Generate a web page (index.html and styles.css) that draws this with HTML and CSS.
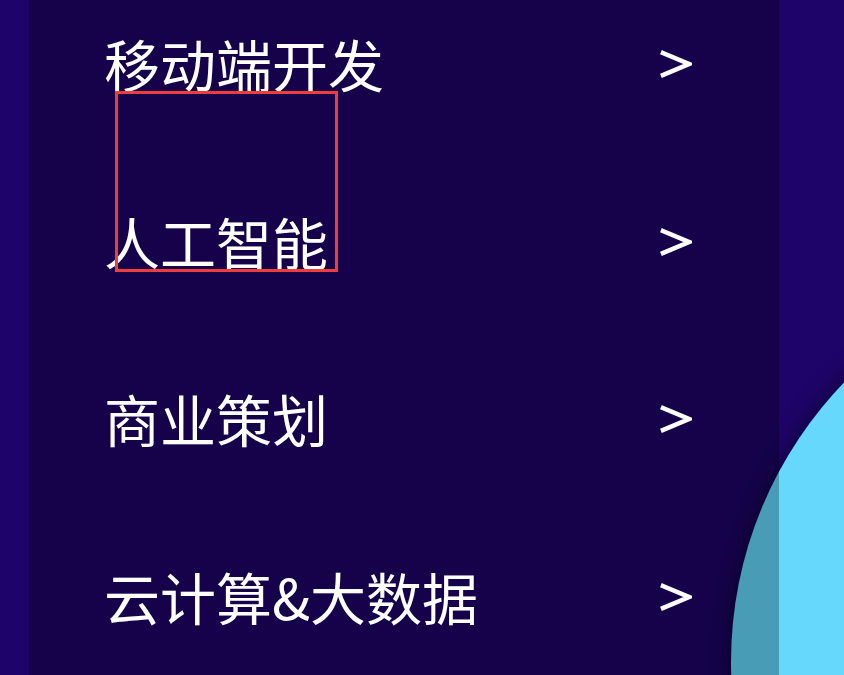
FILE: index.html
```html
<!DOCTYPE html>
<html lang="zh-CN">
<head>
<meta charset="utf-8">
<title>菜单</title>
<link rel="stylesheet" href="styles.css">
</head>
<body>
<div class="stage">
  <div class="orb"></div>
  <nav class="panel">
    <ul class="menu">
      <li class="item"><span class="label">移动端开发</span><svg class="arrow" viewBox="0 0 32 28"><polyline points="3,3 29,14 3,25"/></svg></li>
      <li class="item"><span class="label">人工智能</span><svg class="arrow" viewBox="0 0 32 28"><polyline points="3,3 29,14 3,25"/></svg></li>
      <li class="item"><span class="label">商业策划</span><svg class="arrow" viewBox="0 0 32 28"><polyline points="3,3 29,14 3,25"/></svg></li>
      <li class="item"><span class="label">云计算&amp;大数据</span><svg class="arrow" viewBox="0 0 32 28"><polyline points="3,3 29,14 3,25"/></svg></li>
    </ul>
  </nav>
  <div class="highlight"></div>
</div>
</body>
</html>
```

FILE: styles.css
```css
html, body {
  margin: 0;
  padding: 0;
  overflow: hidden;
}
body {
  background: #1e0468;
  font-family: "Noto Sans CJK SC", "Microsoft YaHei", sans-serif;
}
.stage {
  position: relative;
  width: 844px;
  height: 675px;
  overflow: hidden;
}
.orb {
  position: absolute;
  left: 731px;
  top: 260px;
  width: 804px;
  height: 804px;
  border-radius: 50%;
  background: #66d8fc;
  box-shadow: 0 0 18px 4px rgba(10, 0, 40, 0.55);
}
.panel {
  position: relative;
  z-index: 1;
  margin-left: 29px;
  width: 750px;
  height: 675px;
  background: rgba(0, 0, 0, 0.28);
  box-sizing: border-box;
  padding: 35px 87px 0 75px;
}
.menu {
  list-style: none;
  margin: 0;
  padding: 0;
  display: flex;
  flex-direction: column;
  gap: 121.67px;
}
.item {
  height: 56px;
  display: flex;
  align-items: center;
  justify-content: space-between;
}
.label {
  color: #ffffff;
  font-size: 56px;
  line-height: 56px;
  white-space: nowrap;
}
.arrow {
  width: 32px;
  height: 28px;
  margin-top: 2px;
  fill: none;
  stroke: #ffffff;
  stroke-width: 4.5;
  stroke-linecap: square;
  stroke-linejoin: miter;
}
.highlight {
  position: absolute;
  z-index: 2;
  left: 115px;
  top: 91px;
  width: 223px;
  height: 181px;
  box-sizing: border-box;
  border: 3px solid #f03c3c;
}
```
